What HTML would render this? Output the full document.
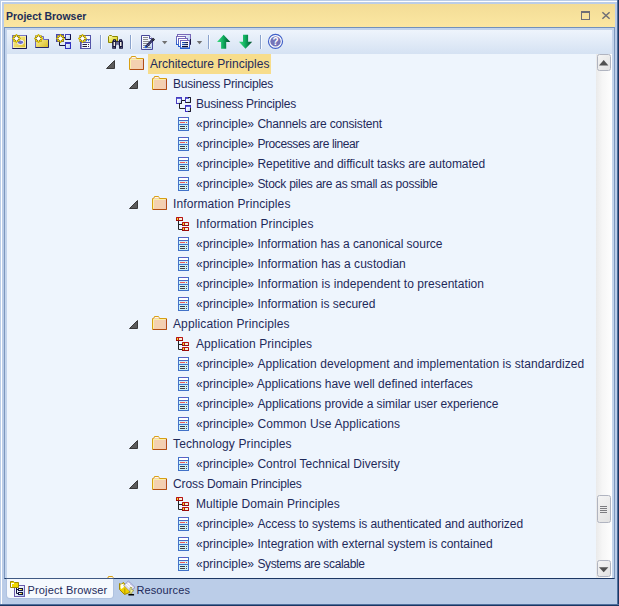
<!DOCTYPE html>
<html><head><meta charset="utf-8"><title>Project Browser</title>
<style>
html,body{margin:0;padding:0}
body{width:619px;height:606px;overflow:hidden;position:relative;background:#bbcde8;font-family:"Liberation Sans",sans-serif;font-size:12px;color:#1e2a5a}
.abs{position:absolute}
#frame-w{left:1px;top:1px;width:616px;height:603px;border-left:1px solid #fff;border-top:1px solid #fff;box-sizing:border-box}
#frame-r1{left:617px;top:0;width:1px;height:606px;background:#50709e}
#frame-r2{left:618px;top:0;width:1px;height:606px;background:#1b3763}
#frame-b1{left:0;top:604px;width:619px;height:1px;background:#50709e}
#frame-b2{left:0;top:605px;width:619px;height:1px;background:#1b3763}
#title{left:4px;top:4px;width:611px;height:23px;background:linear-gradient(#f3dc96,#fbe7a2)}
#title .t{position:absolute;left:2.300px;top:6px;font-weight:bold;font-size:11px;line-height:13px;color:#1c2d57;white-space:nowrap;transform-origin:0 0;transform:scaleX(0.952)}
#inner{left:4px;top:27px;width:611px;height:552px;background:#c3d4ec;border-left:1px solid #7d97bd;border-top:1px solid #7190bc;border-right:1px solid #7d97bd;border-bottom:1px solid #1b3763;box-sizing:border-box}
#toolbar{left:7px;top:30px;width:605px;height:24px;background:linear-gradient(#eef4fc,#d5e2f3)}
#tree{left:7px;top:54px;width:589px;height:524px;background:#eef5fd;overflow:hidden}
#sb{left:596px;top:54px;width:16px;height:524px;background:linear-gradient(90deg,#eaeaea,#f6f6f6 40%,#fefefe)}
.row{position:absolute;left:0;height:20px;width:589px}
.row .ic{position:absolute;top:2px}
.row .arr{position:absolute;top:6px}
.lbl{position:absolute;top:0;height:20px;line-height:21px;padding:0 2px;white-space:nowrap}
.lbl.sel{background:#f7dd8c}
.sbtn{position:absolute;left:0.500px;width:14.500px;height:16px;box-sizing:border-box;border:1px solid #b0b4c0;border-radius:2.500px;background:linear-gradient(135deg,#f4f4f4,#e2e2e2)}
#tabs{left:4px;top:579px;width:612px;height:24px}
.tab{position:absolute;top:0;height:19px;line-height:23px;white-space:nowrap;font-size:12px;color:#1e2a5a}
#tab1{left:3px;width:106px;background:#f5f9fe;border-radius:0 0 3px 3px;box-shadow:0 0 0 1px rgba(150,170,205,0.300)}
.tt{position:absolute;top:0}
</style></head><body>
<svg width="0" height="0" style="position:absolute"><defs>
<linearGradient id="gb" x1="0" y1="0" x2="1" y2="1"><stop offset="0" stop-color="#ffffff"/><stop offset="0.450" stop-color="#f4f8ff"/><stop offset="1" stop-color="#a8c8f0"/></linearGradient>
<g id="i-folder">
<path d="M0.500 2.500H1.500L2.500 0.500H6.500L7.500 2.500H14.500V13.500H0.500Z" fill="#f4d0b0" stroke="#d9a014" stroke-width="1"/>
<path d="M1 13.500H14.500V3" fill="none" stroke="#b24e16" stroke-width="1"/>
<path d="M3 1.500H6.500" fill="none" stroke="#fffbe8" stroke-width="1"/>
<path d="M1.500 12.500V3.500H13.500" fill="none" stroke="#fbf0a8" stroke-width="1"/>
<path d="M13.500 4V12.500" fill="none" stroke="#ecc8c0" stroke-width="1"/>
</g>
<g id="i-diag">
<rect x="1.500" y="1.500" width="5" height="6" fill="url(#gb)" stroke="#4a3cc0"/>
<path d="M4 7.500H6.500V4.500" fill="none" stroke="#202024"/>
<rect x="10.500" y="1.500" width="5" height="5" fill="url(#gb)" stroke="#4a3cc0"/>
<path d="M10.500 6.500H15.500V1.500H13" fill="none" stroke="#202024"/>
<rect x="10.500" y="9.500" width="5" height="6" fill="url(#gb)" stroke="#4030c0"/>
<path d="M13 15.500H15.500V12" fill="none" stroke="#202024"/>
<path d="M2 2.500H6M11 2.500H14M11 10.500H15" stroke="#5c66d4" stroke-width="1"/>
<path d="M7 4.500H10M4.500 8V12.500H10" fill="none" stroke="#202024" stroke-width="1"/>
</g>
<g id="i-comp">
<rect x="1" y="1" width="7" height="4" rx="0.500" fill="#b81414"/><rect x="1" y="4" width="7" height="1" fill="#980c0c"/><rect x="2" y="2" width="1" height="2" fill="#f0e020"/><rect x="4" y="2" width="3" height="2" fill="#f4f0d8"/>
<rect x="7" y="6" width="7" height="4" rx="0.500" fill="#b81414"/><rect x="7" y="9" width="7" height="1" fill="#980c0c"/><rect x="8" y="7" width="1" height="2" fill="#f0e020"/><rect x="10" y="7" width="3" height="2" fill="#f4f0d8"/>
<rect x="7" y="11" width="7" height="4" rx="0.500" fill="#b81414"/><rect x="7" y="14" width="7" height="1" fill="#980c0c"/><rect x="8" y="12" width="1" height="2" fill="#f0e020"/><rect x="10" y="12" width="3" height="2" fill="#f4f0d8"/>
<path d="M3.500 5V13.500H7M3.500 8.500H7" fill="none" stroke="#202024" stroke-width="1"/>
</g>
<g id="i-elem">
<rect x="3.500" y="1.500" width="10" height="13" fill="#ccf2f8" stroke="#4272c8"/>
<rect x="4" y="2" width="9" height="2" fill="#ffffff"/>
<path d="M7 1.500H11" stroke="#6858c0"/>
<path d="M4 4.500H13" stroke="#4c68c4"/>
<path d="M4 8.500H13" stroke="#4272c8"/>
<rect x="5" y="6" width="5" height="1" fill="#f05858"/><rect x="11" y="6" width="1" height="1" fill="#f04848"/>
<rect x="5" y="10" width="5" height="1" fill="#3c3c44"/><rect x="11" y="10" width="1" height="1" fill="#4c4c58"/>
<rect x="5" y="12" width="5" height="1" fill="#3c3c44"/><rect x="11" y="12" width="1" height="1" fill="#4c4c58"/>
</g>
</defs>
</svg>
<div class="abs" id="frame-w"></div>
<div class="abs" id="frame-r1"></div><div class="abs" id="frame-r2"></div>
<div class="abs" id="frame-b1"></div><div class="abs" id="frame-b2"></div>
<div class="abs" id="title"><span class="t">Project Browser</span>
<svg class="abs" style="left:0;top:0" width="611" height="23" viewBox="4 4 611 23"><rect x="581.500" y="11.500" width="8" height="8" fill="none" stroke="#6e6e76" stroke-width="1"/><rect x="581" y="11" width="9" height="2" fill="#6e6e76"/><path d="M602.400 12.300L609.600 18.700M609.600 12.300L602.400 18.700" stroke="#6e6e76" stroke-width="1.500" fill="none"/></svg>
</div>
<div class="abs" id="inner"></div>
<div class="abs" id="toolbar"><svg width="605" height="24" viewBox="7 30 605 24" style="position:absolute;left:0;top:0">
<defs>
<linearGradient id="gy" x1="0" y1="0" x2="1" y2="1"><stop offset="0" stop-color="#f8f0a8"/><stop offset="0.55" stop-color="#ecd860"/><stop offset="1" stop-color="#d4b820"/></linearGradient>
<linearGradient id="gg" x1="0" y1="0" x2="1" y2="0"><stop offset="0" stop-color="#40dc80"/><stop offset="0.450" stop-color="#10b060"/><stop offset="1" stop-color="#004828"/></linearGradient>
<linearGradient id="gw" x1="0" y1="0" x2="1" y2="1"><stop offset="0" stop-color="#ffffff"/><stop offset="1" stop-color="#a8c4f0"/></linearGradient>
<linearGradient id="gy2" x1="0" y1="0" x2="1" y2="1"><stop offset="0" stop-color="#fcfcc0"/><stop offset="0.600" stop-color="#e8e040"/><stop offset="1" stop-color="#d0c820"/></linearGradient>
<linearGradient id="gdoc" x1="0" y1="0" x2="1" y2="1"><stop offset="0" stop-color="#ffffff"/><stop offset="0.500" stop-color="#eef4fe"/><stop offset="1" stop-color="#b4d0f4"/></linearGradient>
<linearGradient id="gwin" x1="0" y1="0" x2="0" y2="1"><stop offset="0" stop-color="#7868b8"/><stop offset="1" stop-color="#2860d0"/></linearGradient>
<linearGradient id="gln" x1="0" y1="0" x2="1" y2="0"><stop offset="0" stop-color="#2060d0"/><stop offset="1" stop-color="#101030"/></linearGradient>
<g id="star">
<path d="M0 -4.400L1.300 -2.700L3 -3L2.700 -1.300L4.400 0L2.700 1.300L3 3L1.300 2.700L0 4.400L-1.300 2.700L-3 3L-2.700 1.300L-4.400 0L-2.700 -1.300L-3 -3L-1.300 -2.700Z" fill="#8c7000" stroke="#b09000" stroke-width="0.500"/>
<circle cx="0" cy="-3.200" r="0.800" fill="#f8e800"/><circle cx="0" cy="3.200" r="0.800" fill="#f8e800"/><circle cx="-3.200" cy="0" r="0.800" fill="#f8e800"/><circle cx="3.200" cy="0" r="0.800" fill="#f8e800"/>
<circle cx="-2.100" cy="-2.100" r="0.700" fill="#f8e800"/><circle cx="2.100" cy="-2.100" r="0.700" fill="#f8e800"/><circle cx="-2.100" cy="2.100" r="0.700" fill="#f8e800"/><circle cx="2.100" cy="2.100" r="0.700" fill="#f8e800"/>
<path d="M0 -2.500L2.500 0L0 2.500L-2.500 0Z" fill="#ffffff"/>
</g>
<g id="sep"><rect x="0" y="35" width="1" height="14" fill="#8aa2cc"/><rect x="1" y="35" width="1" height="14" fill="#f8fbff"/></g>
<path id="dd" d="M0 0H5.400L2.700 3.200Z" fill="#707070"/>
</defs>
<!-- icon1 new model -->
<rect x="12.500" y="35.500" width="14" height="13" fill="url(#gy)" stroke="#7676c8"/>
<rect x="13.500" y="36.500" width="12" height="11" fill="none" stroke="#f8f2b8" stroke-width="1" opacity="0.800"/>
<path d="M12.500 48.500H26.500V35.500" fill="none" stroke="#181850"/>
<ellipse cx="20.500" cy="42.300" rx="3.200" ry="2.200" fill="#7070c8" stroke="#fff" stroke-width="1"/>
<use href="#star" x="16.450" y="38.450"/>
<!-- icon2 new folder -->
<path d="M35.500 36.500H43.500V39.500H48.500V47.500H35.500Z" fill="url(#gy)" stroke="#6868c8"/>
<path d="M35.500 47.500H48.500V39.500" fill="none" stroke="#282868"/>
<use href="#star" x="38.500" y="38.500"/>
<!-- icon3 new diagram -->
<rect x="56.500" y="34.500" width="7" height="7" fill="#8890d8" stroke="#4848b0"/>
<path d="M63.500 37.500H66M59.500 41.500V45.500H66" fill="none" stroke="#101040" stroke-width="1"/>
<rect x="65.500" y="34.500" width="5" height="5" fill="url(#gw)" stroke="#4040b8"/>
<path d="M65.500 39.500H70.500V34.500" fill="none" stroke="#101040"/>
<rect x="65.500" y="42.500" width="5" height="6" fill="url(#gw)" stroke="#3030c0"/>
<rect x="65" y="42" width="6" height="2" fill="#3838c0"/>
<use href="#star" x="60.500" y="38.500"/>
<!-- icon4 new element -->
<rect x="80.500" y="35.500" width="10" height="13" fill="#f6f9ff" stroke="#5454a8"/>
<rect x="81" y="36" width="1" height="12" fill="#8c8ccc"/>
<rect x="81" y="39" width="9" height="1" fill="#6464b0"/>
<rect x="81" y="42" width="9" height="1" fill="#5454a8"/>
<rect x="85.500" y="40" width="1.500" height="1.200" fill="#3070e0"/><rect x="88" y="40" width="1.200" height="1.200" fill="#3070e0"/>
<rect x="82.500" y="44" width="4.500" height="1" fill="#202040"/><rect x="82.500" y="46" width="4.500" height="1" fill="#202040"/>
<rect x="88" y="44" width="1" height="1" fill="#303058"/><rect x="88" y="46" width="1" height="1" fill="#303058"/>
<use href="#star" x="82.500" y="38.500"/>
<use href="#sep" x="100"/>
<!-- icon5 find -->
<path d="M108.500 42.500V36.500L109.500 35.500H111.500L112.500 36.500H117.500V42.500Z" fill="url(#gy2)" stroke="#8c8600"/>
<path d="M113.300 39.300H115.700L116.600 41.500V44.500L116 46V48.700H112.200V46L112.100 42Z" fill="#14143c"/>
<path d="M121.800 39.300H119.400L118.500 41.500V44.500L119.100 46V48.700H122.900V46L123 42Z" fill="#14143c"/>
<rect x="116.200" y="41.800" width="2.700" height="3" fill="#6c6c98"/>
<rect x="116.200" y="41.200" width="2.700" height="0.800" fill="#14143c"/>
<rect x="113.600" y="42" width="1.500" height="4" fill="#f2eee2"/><rect x="120" y="42" width="1.500" height="4" fill="#f2eee2"/>
<rect x="114" y="40" width="0.800" height="0.800" fill="#b0b0c0"/><rect x="120.300" y="40" width="0.800" height="0.800" fill="#b0b0c0"/>
<rect x="113.600" y="47.200" width="0.800" height="0.800" fill="#b0b0c0"/><rect x="120.800" y="47.200" width="0.800" height="0.800" fill="#b0b0c0"/>
<use href="#sep" x="130"/>
<!-- icon6 doc pen -->
<path d="M141.500 35.500H149.500L152.500 38.500V49.500H141.500Z" fill="url(#gdoc)" stroke="#484898"/>
<path d="M149.500 35.500V38.500H152.500" fill="#f8f8ff" stroke="#484898"/>
<path d="M143 37.500H148M143 39.500H148M143 41.500H149M143 43.500H148M143 45.500H150M143 47.500H151" stroke="#8c8c90" stroke-width="1"/>
<path d="M153.300 39.200L145.800 47" stroke="#101040" stroke-width="2.400"/>
<path d="M152.200 40.400L147 45.800" stroke="#c8c8f8" stroke-width="0.900" stroke-dasharray="0.900 0.700"/>
<path d="M154 38.600L152.400 40.400" stroke="#080818" stroke-width="2.600"/>
<path d="M150.300 36.600L153.800 40.200" stroke="#ffffff" stroke-width="0.800" stroke-dasharray="0.800 0.800"/>
<circle cx="145.700" cy="47.100" r="1.100" fill="#2060e0"/>
<use href="#dd" x="162" y="41"/>
<!-- icon7 windows -->
<rect x="177.500" y="34.500" width="13" height="10" fill="url(#gw)" stroke="#7868b8"/>
<path d="M190.500 39V44.500" stroke="#181840"/>
<rect x="176.500" y="36.500" width="9" height="8" fill="#fff" stroke="url(#gwin)"/>
<rect x="178.500" y="38.500" width="9" height="8" fill="#fff" stroke="url(#gwin)"/>
<rect x="180.500" y="40.500" width="9" height="8" fill="#fff" stroke="url(#gwin)"/>
<path d="M181 47.800H189" stroke="#2860d0" stroke-width="0.800"/>
<rect x="182" y="42" width="6" height="1.200" fill="url(#gln)"/><rect x="182" y="44" width="6" height="1.200" fill="url(#gln)"/><rect x="182" y="46" width="6" height="1.200" fill="#101030"/>
<use href="#dd" x="196.800" y="41"/>
<use href="#sep" x="208"/>
<!-- up arrow -->
<path d="M223.600 34.800L230.300 42H226.200V48.700H221.100V42H217Z" fill="url(#gg)"/>
<!-- down arrow -->
<path d="M245.500 48.700L252.200 41.800H248.100V34.800H243V41.800H238.900Z" fill="url(#gg)"/>
<use href="#sep" x="260"/>
<!-- help -->
<circle cx="275.500" cy="41.400" r="7" fill="#fff" stroke="#4060c8" stroke-width="1.200"/>
<circle cx="275.500" cy="41.400" r="5.200" fill="#7474b8"/>
<text x="275.500" y="45.300" font-family="Liberation Sans, sans-serif" font-size="10" font-weight="bold" fill="#fff" text-anchor="middle">?</text>
</svg>
</div>
<div class="abs" id="tree">
<div class="row" style="top:0px"><svg class="arr" style="left:99px" width="10" height="10" viewBox="0 0 10 10"><path d="M8.500 0.500V8.500H0.500Z" fill="#5b5b5b" stroke="#3a3a3a" stroke-width="1" stroke-linejoin="miter"/></svg><svg class="ic" style="left:122px" width="16" height="16" viewBox="0 0 16 16"><use href="#i-folder"/></svg><span class="lbl sel" style="left:141px"><span style="letter-spacing:0.000px">Architecture Principles</span></span></div>
<div class="row" style="top:20px"><svg class="arr" style="left:122px" width="10" height="10" viewBox="0 0 10 10"><path d="M8.500 0.500V8.500H0.500Z" fill="#5b5b5b" stroke="#3a3a3a" stroke-width="1" stroke-linejoin="miter"/></svg><svg class="ic" style="left:145px" width="16" height="16" viewBox="0 0 16 16"><use href="#i-folder"/></svg><span class="lbl" style="left:164px"><span style="letter-spacing:-0.206px">Business Principles</span></span></div>
<div class="row" style="top:40px"><svg class="ic" style="left:168px" width="16" height="16" viewBox="0 0 16 16"><use href="#i-diag"/></svg><span class="lbl" style="left:187px"><span style="letter-spacing:-0.217px">Business Principles</span></span></div>
<div class="row" style="top:60px"><svg class="ic" style="left:168px" width="16" height="16" viewBox="0 0 16 16"><use href="#i-elem"/></svg><span class="lbl" style="left:187px">«principle» <span style="letter-spacing:-0.182px">Channels are consistent</span></span></div>
<div class="row" style="top:80px"><svg class="ic" style="left:168px" width="16" height="16" viewBox="0 0 16 16"><use href="#i-elem"/></svg><span class="lbl" style="left:187px">«principle» <span style="letter-spacing:-0.395px">Processes are linear</span></span></div>
<div class="row" style="top:100px"><svg class="ic" style="left:168px" width="16" height="16" viewBox="0 0 16 16"><use href="#i-elem"/></svg><span class="lbl" style="left:187px">«principle» <span style="letter-spacing:-0.035px">Repetitive and difficult tasks are automated</span></span></div>
<div class="row" style="top:120px"><svg class="ic" style="left:168px" width="16" height="16" viewBox="0 0 16 16"><use href="#i-elem"/></svg><span class="lbl" style="left:187px">«principle» <span style="letter-spacing:-0.257px">Stock piles are as small as possible</span></span></div>
<div class="row" style="top:140px"><svg class="arr" style="left:122px" width="10" height="10" viewBox="0 0 10 10"><path d="M8.500 0.500V8.500H0.500Z" fill="#5b5b5b" stroke="#3a3a3a" stroke-width="1" stroke-linejoin="miter"/></svg><svg class="ic" style="left:145px" width="16" height="16" viewBox="0 0 16 16"><use href="#i-folder"/></svg><span class="lbl" style="left:164px"><span style="letter-spacing:0.095px">Information Principles</span></span></div>
<div class="row" style="top:160px"><svg class="ic" style="left:168px" width="16" height="16" viewBox="0 0 16 16"><use href="#i-comp"/></svg><span class="lbl" style="left:187px"><span style="letter-spacing:0.095px">Information Principles</span></span></div>
<div class="row" style="top:180px"><svg class="ic" style="left:168px" width="16" height="16" viewBox="0 0 16 16"><use href="#i-elem"/></svg><span class="lbl" style="left:187px">«principle» <span style="letter-spacing:-0.030px">Information has a canonical source</span></span></div>
<div class="row" style="top:200px"><svg class="ic" style="left:168px" width="16" height="16" viewBox="0 0 16 16"><use href="#i-elem"/></svg><span class="lbl" style="left:187px">«principle» <span style="letter-spacing:0.038px">Information has a custodian</span></span></div>
<div class="row" style="top:220px"><svg class="ic" style="left:168px" width="16" height="16" viewBox="0 0 16 16"><use href="#i-elem"/></svg><span class="lbl" style="left:187px">«principle» <span style="letter-spacing:0.061px">Information is independent to presentation</span></span></div>
<div class="row" style="top:240px"><svg class="ic" style="left:168px" width="16" height="16" viewBox="0 0 16 16"><use href="#i-elem"/></svg><span class="lbl" style="left:187px">«principle» <span style="letter-spacing:0.000px">Information is secured</span></span></div>
<div class="row" style="top:260px"><svg class="arr" style="left:122px" width="10" height="10" viewBox="0 0 10 10"><path d="M8.500 0.500V8.500H0.500Z" fill="#5b5b5b" stroke="#3a3a3a" stroke-width="1" stroke-linejoin="miter"/></svg><svg class="ic" style="left:145px" width="16" height="16" viewBox="0 0 16 16"><use href="#i-folder"/></svg><span class="lbl" style="left:164px"><span style="letter-spacing:0.119px">Application Principles</span></span></div>
<div class="row" style="top:280px"><svg class="ic" style="left:168px" width="16" height="16" viewBox="0 0 16 16"><use href="#i-comp"/></svg><span class="lbl" style="left:187px"><span style="letter-spacing:0.095px">Application Principles</span></span></div>
<div class="row" style="top:300px"><svg class="ic" style="left:168px" width="16" height="16" viewBox="0 0 16 16"><use href="#i-elem"/></svg><span class="lbl" style="left:187px">«principle» <span style="letter-spacing:0.070px">Application development and implementation is standardized</span></span></div>
<div class="row" style="top:320px"><svg class="ic" style="left:168px" width="16" height="16" viewBox="0 0 16 16"><use href="#i-elem"/></svg><span class="lbl" style="left:187px">«principle» <span style="letter-spacing:0.000px">Applications have well defined interfaces</span></span></div>
<div class="row" style="top:340px"><svg class="ic" style="left:168px" width="16" height="16" viewBox="0 0 16 16"><use href="#i-elem"/></svg><span class="lbl" style="left:187px">«principle» <span style="letter-spacing:-0.067px">Applications provide a similar user experience</span></span></div>
<div class="row" style="top:360px"><svg class="ic" style="left:168px" width="16" height="16" viewBox="0 0 16 16"><use href="#i-elem"/></svg><span class="lbl" style="left:187px">«principle» <span style="letter-spacing:0.091px">Common Use Applications</span></span></div>
<div class="row" style="top:380px"><svg class="arr" style="left:122px" width="10" height="10" viewBox="0 0 10 10"><path d="M8.500 0.500V8.500H0.500Z" fill="#5b5b5b" stroke="#3a3a3a" stroke-width="1" stroke-linejoin="miter"/></svg><svg class="ic" style="left:145px" width="16" height="16" viewBox="0 0 16 16"><use href="#i-folder"/></svg><span class="lbl" style="left:164px"><span style="letter-spacing:0.125px">Technology Principles</span></span></div>
<div class="row" style="top:400px"><svg class="ic" style="left:168px" width="16" height="16" viewBox="0 0 16 16"><use href="#i-elem"/></svg><span class="lbl" style="left:187px">«principle» <span style="letter-spacing:0.046px">Control Technical Diversity</span></span></div>
<div class="row" style="top:420px"><svg class="arr" style="left:122px" width="10" height="10" viewBox="0 0 10 10"><path d="M8.500 0.500V8.500H0.500Z" fill="#5b5b5b" stroke="#3a3a3a" stroke-width="1" stroke-linejoin="miter"/></svg><svg class="ic" style="left:145px" width="16" height="16" viewBox="0 0 16 16"><use href="#i-folder"/></svg><span class="lbl" style="left:164px"><span style="letter-spacing:-0.114px">Cross Domain Principles</span></span></div>
<div class="row" style="top:440px"><svg class="ic" style="left:168px" width="16" height="16" viewBox="0 0 16 16"><use href="#i-comp"/></svg><span class="lbl" style="left:187px"><span style="letter-spacing:0.096px">Multiple Domain Principles</span></span></div>
<div class="row" style="top:460px"><svg class="ic" style="left:168px" width="16" height="16" viewBox="0 0 16 16"><use href="#i-elem"/></svg><span class="lbl" style="left:187px">«principle» <span style="letter-spacing:-0.079px">Access to systems is authenticated and authorized</span></span></div>
<div class="row" style="top:480px"><svg class="ic" style="left:168px" width="16" height="16" viewBox="0 0 16 16"><use href="#i-elem"/></svg><span class="lbl" style="left:187px">«principle» <span style="letter-spacing:-0.020px">Integration with external system is contained</span></span></div>
<div class="row" style="top:500px"><svg class="ic" style="left:168px" width="16" height="16" viewBox="0 0 16 16"><use href="#i-elem"/></svg><span class="lbl" style="left:187px">«principle» <span style="letter-spacing:-0.337px">Systems are scalable</span></span></div>
<div class="row" style="top:520px"><svg class="ic" style="left:99px" width="16" height="16" viewBox="0 0 16 16"><use href="#i-folder"/></svg></div>
</div>
<div class="abs" id="sb">
<div class="sbtn" style="top:0;height:16.500px"></div>
<svg class="abs" style="left:3px;top:6px" width="10" height="6" viewBox="0 0 10 6"><path d="M0 5.500L4.700 0L9.400 5.500Z" fill="#505050"/></svg>
<div class="sbtn" style="top:441px;height:27.500px"></div>
<svg class="abs" style="left:4px;top:452px" width="8" height="8" viewBox="0 0 8 8"><path d="M0 0.500H7M0 2.500H7M0 4.500H7M0 6.500H7" stroke="#7c7c80" stroke-width="1"/></svg>
<div class="sbtn" style="top:506px;height:16.500px"></div>
<svg class="abs" style="left:3px;top:513px" width="10" height="6" viewBox="0 0 10 6"><path d="M0 0.200L4.700 5.200L9.400 0.200Z" fill="#505050"/></svg>
</div>
<div class="abs" id="tabs">
<div class="tab" id="tab1"><span class="tt" style="left:20.500px;font-size:11px;letter-spacing:0.150px">Project Browser</span></div>
<div class="tab" style="left:0"><span class="tt" style="left:132.500px;font-size:11px;letter-spacing:0.100px">Resources</span></div>
<svg class="abs" style="left:0;top:0" width="200" height="24" viewBox="4 579 200 24"><defs><linearGradient id="gtb" x1="0" y1="0" x2="1" y2="1"><stop offset="0" stop-color="#ffffff"/><stop offset="0.500" stop-color="#e8f0fc"/><stop offset="1" stop-color="#9cc0f0"/></linearGradient></defs>
<!-- project browser icon -->
<rect x="14.500" y="585.500" width="10" height="11" fill="url(#gtb)" stroke="#6a5cae"/>
<path d="M10.500 587.500V581.500H13.500L14.500 582.500H18.500V587.500Z" fill="#f0d800" stroke="#a08a00"/>
<path d="M11 583H14V584H12V587H11Z" fill="#ffffff"/>
<path d="M16.500 588V593.500H19M16.500 589.500H19" fill="none" stroke="#141440" stroke-width="1"/>
<rect x="18.500" y="588.500" width="4" height="2" fill="#f4d820" stroke="#141440"/>
<rect x="18.500" y="592.500" width="4" height="2" fill="#f4d820" stroke="#141440"/>
<rect x="19" y="589" width="1.500" height="1" fill="#fff"/><rect x="19" y="593" width="1.500" height="1" fill="#fff"/>
<!-- resources icon -->
<path d="M119.500 583.500L121 584.500L123.500 582.500L125 584.500L129.500 590V592.500L124.500 594.500L119.500 589.500Z" fill="#f0d000" stroke="#a08800" stroke-width="1"/>
<path d="M120.500 584.500L123.500 583.800L124 587L121.500 589L120.500 588Z" fill="#fffff0"/>
<path d="M124.800 588.500V594" stroke="#a08800" stroke-width="0.800"/>
<path d="M128.400 581L135 587.500L130 591.500L124 585.500Z" fill="#ffffff" stroke="#6060b0" stroke-width="0.600"/>
<path d="M127 583.500L132.500 589M128.600 582.300L134 587.700M125.500 585L131 590.500" stroke="#5858b0" stroke-width="0.700" stroke-dasharray="0.800 0.800"/>
<path d="M130 587.500H132L131.500 589.500L134 590.500L132 592L131.500 594H130Z" fill="#f0f090" stroke="#8c8840" stroke-width="0.600"/>
<rect x="128.300" y="594" width="5.800" height="1.600" rx="0.500" fill="#000"/>
</svg>
</div>
</body></html>
